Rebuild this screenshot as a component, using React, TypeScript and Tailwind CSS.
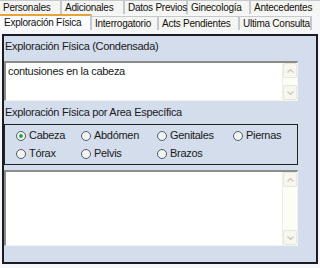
import React from 'react'

const FONT = { fontFamily: '"Liberation Sans", Arial, sans-serif' }

const ROW1 = [
  { label: 'Personales', w: 'w-[62px]' },
  { label: 'Adicionales', w: 'w-[63px]' },
  { label: 'Datos Previos', w: 'w-[63px]' },
  { label: 'Ginecología', w: 'w-[63px]' },
  { label: 'Antecedentes', w: 'w-[72px]' },
]

const ROW2 = [
  { label: 'Exploración Física', w: 'w-[92px]', active: true },
  { label: 'Interrogatorio', w: 'w-[67px]' },
  { label: 'Acts Pendientes', w: 'w-[81px]' },
  { label: 'Ultima Consulta', w: 'w-[72px]' },
]

const AREAS = [
  { label: 'Cabeza', w: 'w-[65px]' },
  { label: 'Abdómen', w: 'w-[76px]' },
  { label: 'Genitales', w: 'w-[76px]' },
  { label: 'Piernas', w: 'w-[60px]' },
  { label: 'Tórax', w: 'w-[65px]' },
  { label: 'Pelvis', w: 'w-[76px]' },
  { label: 'Brazos', w: 'w-[76px]' },
]

function ScrollBar() {
  return (
    <div className="flex w-[15px] flex-col justify-between bg-[#fdfdf8] border-l border-[#f1efe2]">
      <div className="flex h-[15px] items-center justify-center rounded-[2px] border border-[#e8e7de] bg-[#f7f6ef]">
        <svg width="7" height="4" viewBox="0 0 7 4">
          <path d="M0.5 3.5 L3.5 0.5 L6.5 3.5" fill="none" stroke="#c9c7ba" strokeWidth="1.2" />
        </svg>
      </div>
      <div className="flex h-[15px] items-center justify-center rounded-[2px] border border-[#e8e7de] bg-[#f7f6ef]">
        <svg width="7" height="4" viewBox="0 0 7 4">
          <path d="M0.5 0.5 L3.5 3.5 L6.5 0.5" fill="none" stroke="#c9c7ba" strokeWidth="1.2" />
        </svg>
      </div>
    </div>
  )
}

function Radio({ label, w, checked }: { label: string; w: string; checked?: boolean }) {
  return (
    <div className={`${w} flex shrink-0 items-center gap-[3px]`}>
      <div className="flex h-[10px] w-[10px] items-center justify-center rounded-full border border-[#4b5d75] bg-[#f4f4f0]">
        {checked && <div className="h-[4px] w-[4px] rounded-full bg-[#2fa83a]" />}
      </div>
      <span className="text-[11px] leading-none tracking-[-0.3px] text-[#1a1a1a]">{label}</span>
    </div>
  )
}

export default function App() {
  return (
    <div className="flex h-[268px] w-[320px] flex-col overflow-hidden bg-[#f6f7fa]" style={FONT}>
      {/* back row of tabs */}
      <div className="flex h-[14px] items-end">
        {ROW1.map((t) => (
          <div
            key={t.label}
            className={`${t.w} h-[14px] shrink-0 border-r-2 border-t border-[#c4c9d0] bg-[#f5f5f2] pl-[3px] text-[10px] leading-[13px] tracking-[-0.25px] text-[#111] whitespace-nowrap`}
          >
            {t.label}
          </div>
        ))}
      </div>

      {/* front row of tabs */}
      <div className="flex h-[16px]">
        {ROW2.map((t) =>
          t.active ? (
            <div
              key={t.label}
              className={`${t.w} h-[16px] shrink-0 border-r-2 border-t-2 border-[#e9a23a] border-r-[#c4c9d0] bg-[#fcfcfe] pl-[4px] text-[10px] leading-[13px] tracking-[-0.25px] text-[#111] whitespace-nowrap`}
            >
              {t.label}
            </div>
          ) : (
            <div
              key={t.label}
              className={`${t.w} mt-[2px] h-[14px] shrink-0 border-r-2 border-t border-[#c4c9d0] bg-[#f5f5f2] pl-[3px] text-[10px] leading-[13px] tracking-[-0.25px] text-[#111] whitespace-nowrap`}
            >
              {t.label}
            </div>
          )
        )}
      </div>

      {/* tab page */}
      <div className="flex flex-1 flex-col px-[2px] pt-[4px] pb-[4px]">
        <div className="flex flex-1 flex-col border-2 border-[#1c1c24] bg-[#d4ddec] pl-[0px] pr-[18px] text-[11px] tracking-[-0.3px]">
          <div className="mt-[4px] pl-[1px] leading-[13px] text-[#1a1a1a]">
            Exploración Física (Condensada)
          </div>

          <div className="mt-[8px] flex h-[40px] border-t-2 border-l-2 border-[#8c8c88] border-b border-r border-b-[#f2f2f2] border-r-[#f2f2f2] bg-white">
            <div className="flex-1 pl-[2px] pt-[2px] leading-[13px] text-[#1a1a1a]">
              contusiones en la cabeza
            </div>
            <ScrollBar />
          </div>

          <div className="mt-[5px] pl-[1px] leading-[13px] text-[#1a1a1a]">
            Exploración Física por Area Específica
          </div>

          <div className="mt-[5px] flex h-[41px] flex-wrap content-center gap-y-[7px] border border-[#222] pl-[11px]">
            {AREAS.map((a, i) => (
              <Radio key={a.label} label={a.label} w={a.w} checked={i === 0} />
            ))}
          </div>

          <div className="mt-[5px] flex h-[76px] border-t-2 border-l-2 border-[#8c8c88] border-b border-r border-b-[#f2f2f2] border-r-[#f2f2f2] bg-white">
            <div className="flex-1" />
            <ScrollBar />
          </div>
        </div>
      </div>
    </div>
  )
}
